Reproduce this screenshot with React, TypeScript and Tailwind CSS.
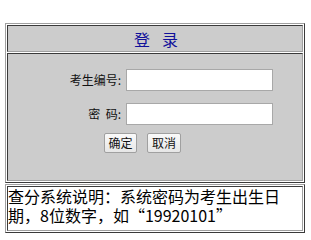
import React from "react";

const cjk = { fontFamily: '"SimSun", "Noto Sans CJK SC", sans-serif' };

export default function App() {
  return (
    <div className="w-[311px] h-[240px] bg-white pt-[23px] pl-[5px] flex flex-col" style={cjk}>
      {/* Table 1 */}
      <div className="w-[300px] h-[160px] border border-t-[#a0a0a0] border-l-[#a0a0a0] border-b-[#3a3a3a] border-r-[#3a3a3a] p-[1px] flex flex-col gap-[1px]">
        <div className="h-[27px] border border-t-[#3a3a3a] border-l-[#3a3a3a] border-b-[#a0a0a0] border-r-[#a0a0a0] bg-[#cccccc] flex items-center justify-center">
          <div className="flex gap-[12px] text-[16px] leading-[18px] text-[#10109a] pl-[2px]">
            <span>登</span>
            <span>录</span>
          </div>
        </div>
        <div className="h-[128px] border border-t-[#3a3a3a] border-l-[#3a3a3a] border-b-[#a0a0a0] border-r-[#a0a0a0] bg-[#cccccc] flex flex-col pt-[15px]">
          <div className="flex items-center h-[22px]">
            <div className="w-[113px] text-right text-[12px] leading-[14px] text-[#111]">考生编号:</div>
            <input className="ml-[5px] w-[147px] h-[22px] bg-white border border-[#a8a8a8] outline-none" />
          </div>
          <div className="flex items-center h-[22px] mt-[12px]">
            <div className="w-[113px] text-right text-[12px] leading-[14px] text-[#111]">密&nbsp;&nbsp;码:</div>
            <input type="password" className="ml-[5px] w-[147px] h-[22px] bg-white border border-[#a8a8a8] outline-none" />
          </div>
          <div className="flex mt-[8px] pl-[96px] gap-[10px]">
            <button className="w-[33px] h-[20px] border border-[#a0a0a0] rounded-[2px] bg-[linear-gradient(#fafafa,#e6e6e6)] text-[12px] leading-[14px] text-[#111] flex items-center justify-center">确定</button>
            <button className="w-[34px] h-[20px] border border-[#a0a0a0] rounded-[2px] bg-[linear-gradient(#fafafa,#e6e6e6)] text-[12px] leading-[14px] text-[#111] flex items-center justify-center">取消</button>
          </div>
        </div>
      </div>
      {/* Table 2 */}
      <div className="mt-[1px] w-[300px] h-[49px] border border-t-[#a0a0a0] border-l-[#a0a0a0] border-b-[#3a3a3a] border-r-[#3a3a3a] p-[1px] flex flex-col">
        <div className="h-[45px] border border-t-[#3a3a3a] border-l-[#3a3a3a] border-b-[#a0a0a0] border-r-[#a0a0a0] bg-white text-[16px] leading-[19px] text-black whitespace-nowrap flex flex-col">
          <span>查分系统说明：系统密码为考生出生日</span>
          <span>期，8位数字，如“19920101”</span>
        </div>
      </div>
    </div>
  );
}
